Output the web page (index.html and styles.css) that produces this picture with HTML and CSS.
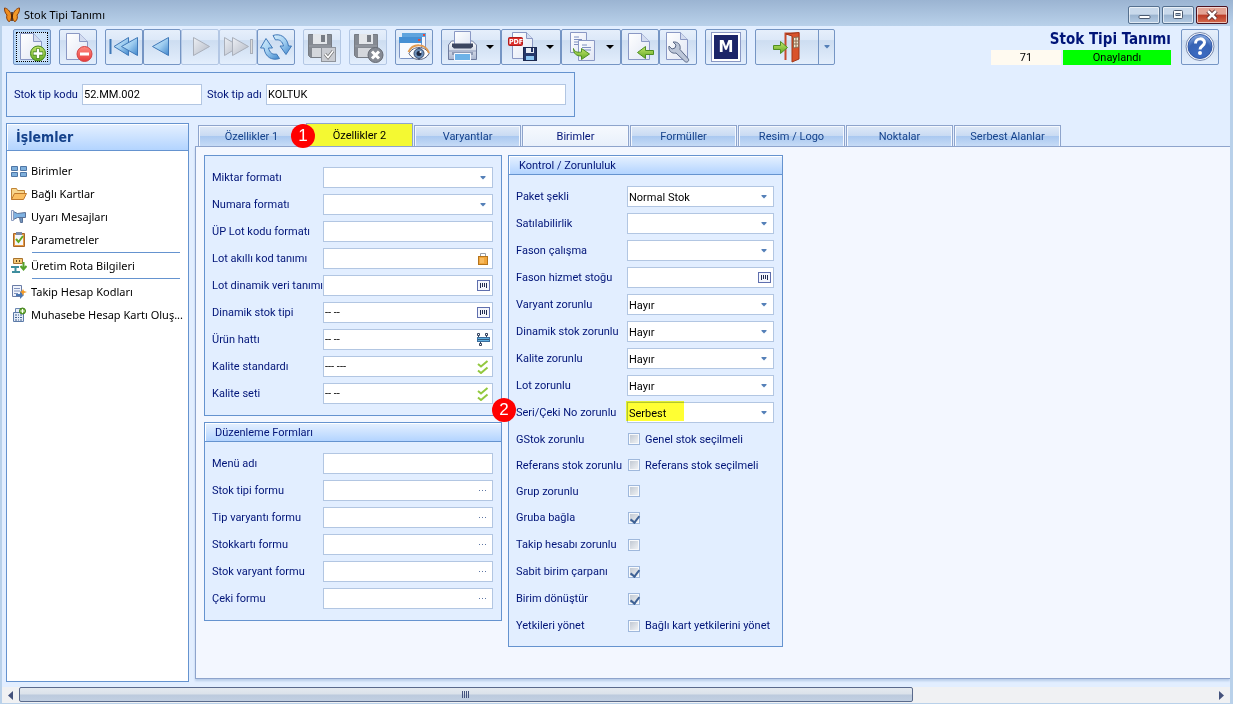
FILE: index.html
```html
<!DOCTYPE html>
<html lang="tr">
<head>
<meta charset="utf-8">
<meta name="viewport" content="width=device-width, initial-scale=1">
<title>Stok Tipi Tanımı</title>
<link rel="stylesheet" href="styles.css">
</head>
<body>
<svg class="sprite" aria-hidden="true">
  <defs>
    <linearGradient id="gBlue" x1="0" y1="0" x2="1" y2="1"><stop offset="0" stop-color="#d8effc"/><stop offset=".5" stop-color="#9fcdf0"/><stop offset="1" stop-color="#3f86cc"/></linearGradient>
    <linearGradient id="gGray" x1="0" y1="0" x2="1" y2="1"><stop offset="0" stop-color="#eceff4"/><stop offset="1" stop-color="#b4bac6"/></linearGradient>
    <linearGradient id="gPage" x1="0" y1="0" x2="1" y2="1"><stop offset="0" stop-color="#ffffff"/><stop offset="1" stop-color="#e0e6f4"/></linearGradient>
    <linearGradient id="gGreen" x1="0" y1="0" x2="0" y2="1"><stop offset="0" stop-color="#c3e66a"/><stop offset="1" stop-color="#62a824"/></linearGradient>
    <linearGradient id="gRed" x1="0" y1="0" x2="0" y2="1"><stop offset="0" stop-color="#ff8a80"/><stop offset="1" stop-color="#e83a3a"/></linearGradient>
    <linearGradient id="gSteel" x1="0" y1="0" x2="0" y2="1"><stop offset="0" stop-color="#ffffff"/><stop offset="1" stop-color="#aab6d0"/></linearGradient>
    <radialGradient id="gHelp" cx=".5" cy=".85" r=".9"><stop offset="0" stop-color="#3d6cc4"/><stop offset=".6" stop-color="#3763b4"/><stop offset="1" stop-color="#9dbcec"/></radialGradient>
  </defs>
  <symbol id="page" viewBox="0 0 32 32"><path d="M4.500 2.500h13l8 8v18h-21z" fill="url(#gPage)" stroke="#8a98c4"/><path d="M17.500 2.500v8h8" fill="#d3dcf0" stroke="#8a98c4"/></symbol>
  <symbol id="floppy" viewBox="0 0 32 32"><path d="M2.500 3.500h23v23h-21l-2-2z" fill="#858a92" stroke="#777c84"/><rect x="7" y="3" width="14" height="10" fill="#e3e6ea"/><rect x="15" y="4" width="4" height="7" fill="#777c84"/><rect x="6" y="17" width="17" height="9" fill="#d4d7dc"/><path d="M3 15h22" stroke="#9ca0a8"/></symbol>
  <symbol id="list" viewBox="0 0 13 11"><rect x=".5" y=".5" width="12" height="10" fill="#f4f6fc" stroke="#5f6fae"/><path d="M3.500 3v5M5.500 3v4M7.500 3v4M9.500 3v5" stroke="#1f2a50"/></symbol>
  <symbol id="checks" viewBox="0 0 12 14"><path d="M1 4l3 2.500L10.500 1M1 10.500L4 13l6.500-5.500" fill="none" stroke="#92c83e" stroke-width="2"/></symbol>
  <symbol id="dots" viewBox="0 0 10 3"><path d="M1 1.500h1M4 1.500h1M7 1.500h1" stroke="#5d76a4"/></symbol>
  <symbol id="drop" viewBox="0 0 8 4"><path d="M0 0h8L4 4z" fill="#000"/></symbol>
  <symbol id="caret" viewBox="0 0 6 4"><path d="M.500 0h5v1L3 3.500 .500 1z" fill="#5580b8"/></symbol>
</svg>

<div class="window">
  <header class="titlebar">
    <svg class="logo" viewBox="0 0 16 16"><path d="M7.500 8C6 4 3 1 .500 1c0 3 .500 5 2.500 7-1 2 0 6 2 6.500 1.500 0 2-2 2.500-4z" fill="#ef8d1e" stroke="#8a3d08"/><path d="M8.500 8C10 4 13 1 15.500 1c0 3-.500 5-2.500 7 1 2 0 6-2 6.500-1.500 0-2-2-2.500-4z" fill="#f29a28" stroke="#8a3d08"/><path d="M8 5v9" stroke="#3e1d05" stroke-width="1.500"/></svg>
    <span class="caption">Stok Tipi Tanımı</span>
    <div class="winbtns">
      <button aria-label="Küçült"><svg viewBox="0 0 30 16"><rect x="10" y="8.500" width="11" height="3" rx="1" fill="#fff" stroke="#4b5a70"/></svg></button>
      <button aria-label="Ekranı kapla"><svg viewBox="0 0 30 16"><rect x="10.500" y="3.500" width="9" height="8" rx="1" fill="#fff" stroke="#4b5a70"/><rect x="13" y="6.500" width="4" height="2" fill="#b4c6dc" stroke="#4b5a70"/></svg></button>
      <button class="close" aria-label="Kapat"><svg viewBox="0 0 30 16"><path d="M11 4l8 8M19 4l-8 8" stroke="#5a2a2a" stroke-width="4.500"/><path d="M11 4l8 8M19 4l-8 8" stroke="#fff" stroke-width="2.500"/></svg></button>
    </div>
  </header>

  <main class="client">
    <div class="top">
      <nav class="toolbar" aria-label="Araç çubuğu">
        <div class="group"><button class="focus" aria-label="Yeni"><svg viewBox="0 0 32 32"><use href="#page" width="32" height="32"/><circle cx="22" cy="22.500" r="7.500" fill="url(#gGreen)" stroke="#43851b"/><path d="M22 17.500v10M17 22.500h10" stroke="#3c7a18" stroke-width="4"/><path d="M22 18v9M17.500 22.500h9" stroke="#fff" stroke-width="2.500"/></svg></button></div>
        <div class="group"><button aria-label="Sil"><svg viewBox="0 0 32 32"><use href="#page" width="32" height="32"/><circle cx="22.500" cy="23" r="7.500" fill="url(#gRed)" stroke="#d24444"/><rect x="18" y="21.500" width="9" height="3" fill="#fff"/></svg></button></div>
        <div class="group">
          <button aria-label="İlk"><svg viewBox="0 0 32 32"><path d="M2.500 8v15" stroke="#3f78b8" stroke-width="2"/><path d="M20.500 6.500v18L6 15.500z" fill="url(#gBlue)" stroke="#3f78b8"/><path d="M29.500 6.500v18L13.500 15.500z" fill="url(#gBlue)" stroke="#3f78b8"/></svg></button>
          <button aria-label="Önceki"><svg viewBox="0 0 32 32"><path d="M22.500 6.500v18L6.500 15.500z" fill="url(#gBlue)" stroke="#3f78b8"/></svg></button>
          <button class="off" disabled aria-label="Sonraki"><svg viewBox="0 0 32 32"><path d="M9.500 6.500v18L25.500 15.500z" fill="url(#gGray)" stroke="#a9afba"/></svg></button>
          <button class="off" disabled aria-label="Son"><svg viewBox="0 0 32 32"><path d="M2.500 6.500v18L17.500 15.500z" fill="url(#gGray)" stroke="#a9afba"/><path d="M10.500 6.500v18L26.500 15.500z" fill="url(#gGray)" stroke="#a9afba"/><rect x="28.500" y="8.500" width="2" height="14" fill="#ddd" stroke="#a9afba"/></svg></button>
          <button aria-label="Yenile"><svg viewBox="0 0 32 32"><path d="M13 4.500C20 2 27 6 28.500 15h3L26 23.500 20 15h3.500c-1-4.500-4-7-8-6z" fill="url(#gBlue)" stroke="#3f78b8"/><path d="M19.500 27.500C12 30 5 26 4 17H.500L6 7.500l6.500 9.500H8.500c1 4.500 4 7 8 6z" fill="url(#gBlue)" stroke="#3f78b8"/></svg></button>
        </div>
        <div class="group"><button class="off" disabled aria-label="Kaydet"><svg viewBox="0 0 32 32"><use href="#floppy" width="32" height="32"/><rect x="15.500" y="16.500" width="14" height="14" fill="#c9ccd2" stroke="#8f949c"/><path d="M19 23l3 3.500L27 20" fill="none" stroke="#777" stroke-width="3"/><path d="M19 23l3 3.500L27 20" fill="none" stroke="#fff" stroke-width="1.500"/></svg></button></div>
        <div class="group"><button class="off" disabled aria-label="Kaydet ve kapat"><svg viewBox="0 0 32 32"><use href="#floppy" width="32" height="32"/><circle cx="23.500" cy="24" r="7.500" fill="#868b94" stroke="#666b74"/><path d="M20 20.500l7 7M27 20.500l-7 7" stroke="#fff" stroke-width="3"/></svg></button></div>
        <div class="group"><button aria-label="Önizle"><svg viewBox="0 0 32 32"><rect x="4.500" y="2.500" width="23" height="18" rx="1" fill="#f2f6fd" stroke="#7a93c4"/><path d="M4 2h24v4H4z" fill="#5fa4de"/><rect x="1.500" y="6.500" width="22" height="21" rx="1" fill="#f7faff" stroke="#7a93c4"/><path d="M1 6h23v6H1z" fill="#4690d4"/><path d="M20 9h2.500M25 4h2" stroke="#e2483c" stroke-width="2"/><path d="M11 22.500c4-8 16-8 20 0-4 8-16 8-20 0z" fill="#fff" stroke="#54607e"/><path d="M10.500 21c4-9 17-9 20.500 1" fill="none" stroke="#e09a50" stroke-width="2"/><circle cx="21" cy="22.500" r="5" fill="#6c8fb8" stroke="#3a4d70"/><circle cx="21" cy="22.500" r="2.500" fill="#1c2740"/><circle cx="22.500" cy="21" r="1" fill="#fff"/></svg></button></div>
        <div class="group">
          <button class="menu" aria-label="Yazdır"><svg viewBox="0 0 32 32"><path d="M2.500 28.500V14l3-4h21l4 4v14.500z" fill="url(#gSteel)" stroke="#6d7a9c"/><path d="M8.500 .500h16v14h-16z" fill="url(#gPage)" stroke="#8a98c4"/><path d="M6 12.500h21v3l-2 2H8l-2-2z" fill="#3c4660"/><path d="M3 20h27" stroke="#8f9cbc"/><path d="M6 21h21v3H6z" fill="#8e99b4"/><path d="M8.500 22.500h16v7h-16z" fill="#6db2e8" stroke="#f5f8ff"/></svg><svg class="arrow" viewBox="0 0 8 4"><use href="#drop"/></svg></button>
          <button class="menu" aria-label="PDF kaydet"><svg viewBox="0 0 32 32"><path d="M6.500 1.500h14l6 6v20h-20z" fill="url(#gPage)" stroke="#8a98c4"/><path d="M20.500 1.500v6h6" fill="#d3dcf0" stroke="#8a98c4"/><rect x="2.500" y="6.500" width="14" height="8" rx="1" fill="#dc2e2a" stroke="#b01c1c"/><text x="3" y="13" class="pdf">PDF</text><rect x="17.500" y="16.500" width="13" height="13" fill="#26386a" stroke="#1a2850"/><rect x="20" y="17" width="8" height="5" fill="#e8ecf4"/><rect x="25" y="17" width="2" height="4" fill="#26386a"/><rect x="20" y="25" width="8" height="4" fill="#8ec6f2"/></svg><svg class="arrow" viewBox="0 0 8 4"><use href="#drop"/></svg></button>
          <button class="menu" aria-label="Kopyala"><svg viewBox="0 0 32 32"><path d="M4.500 1.500h16v20h-16z" fill="url(#gPage)" stroke="#8a98c4"/><path d="M8 6h5M8 8.500h8M8 11h8M8 13.500h8" stroke="#7f90c0"/><path d="M12.500 9.500h16v20h-16z" fill="url(#gPage)" stroke="#8a98c4"/><path d="M16 14h5M16 16.500h9M16 19h9" stroke="#7f90c0"/><path d="M7.500 17.500c1 4 5 4 8 3.500v-3.500l8 5.500-8 5.500v-3.500c-5 0-8-2-8-7.500z" fill="url(#gGreen)" stroke="#4f8f22"/></svg><svg class="arrow" viewBox="0 0 8 4"><use href="#drop"/></svg></button>
          <button aria-label="İçeri al"><svg viewBox="0 0 32 32"><use href="#page" width="32" height="32"/><path d="M29.500 19.500h-8v-4l-8 6 8 6v-4h8z" fill="url(#gGreen)" stroke="#4f8f22"/></svg></button>
          <button aria-label="Ayarlar"><svg viewBox="0 0 32 32"><path d="M4.500 1.500h14l7 7v20h-21z" fill="url(#gPage)" stroke="#8a98c4"/><path d="M18.500 1.500v7h7" fill="#d3dcf0" stroke="#8a98c4"/><path d="M11 11l3 3-1 3-3 1-3-3c-1 5 3 8 7 7l9 8.500c2 2 5-1 3-3L18 18.500c1-5-2-8-7-7.500z" fill="#bcc6d8" stroke="#5c6a88"/></svg></button>
        </div>
        <div class="group"><button class="m" aria-label="M"><span>M</span></button></div>
        <div class="group"><button class="exit" aria-label="Çıkış"><svg viewBox="0 0 32 32"><path d="M14.500 29V2.500h13V9" fill="none" stroke="#c64a2c" stroke-width="2"/><path d="M15 3l13-1.500V28l-7 3V5z" fill="#d9532b" stroke="#a33719"/><path d="M22.500 6.500l5-.5v10l-5 1z" fill="#f3ead2" stroke="#8d6a50"/><path d="M25 6v10M22 10h6M22 13h6" stroke="#8d6a50"/><path d="M2.500 14.500h7v-4l7 6-7 6v-4h-7z" fill="url(#gGreen)" stroke="#4f8f22"/></svg></button><button class="split" aria-label="Çıkış seçenekleri"><svg class="small" viewBox="0 0 6 4"><use href="#caret"/></svg></button></div>
      </nav>
      <div class="status">
        <h1>Stok Tipi Tanımı</h1>
        <div class="tags"><span class="num">71</span><span class="ok">Onaylandı</span></div>
      </div>
      <button class="help" aria-label="Yardım"><svg viewBox="0 0 32 32"><circle cx="16" cy="15.500" r="14" fill="#f1f4fa" stroke="#7c8db0"/><circle cx="16" cy="15.500" r="12" fill="url(#gHelp)" stroke="#3159a8"/><path d="M11.500 12.500c0-6 9-6 9-1 0 3.500-4.500 3.500-4.500 7" fill="none" stroke="#fff" stroke-width="3"/><circle cx="16" cy="22" r="2" fill="#fff"/></svg></button>
    </div>

    <form class="keys">
      <label for="kod">Stok tip kodu</label><input id="kod" class="code" value="52.MM.002">
      <label for="adi" class="second">Stok tip adı</label><input id="adi" class="name" value="KOLTUK">
    </form>

    <div class="work">
      <aside class="side">
        <h2>İşlemler</h2>
        <ul>
          <li><a href="#"><svg viewBox="0 0 16 16"><path d="M.500 3.500h6v4h-6zM9.500 3.500h6v4h-6zM.500 9.500h6v4h-6zM9.500 9.500h6v4h-6z" fill="#7fb0dc" stroke="#4f76a6"/></svg>Birimler</a></li>
          <li><a href="#"><svg viewBox="0 0 16 16"><path d="M.500 13.500v-11h5l1 2h7v3" fill="#f7d58c" stroke="#c08436"/><path d="M.500 13.500l3-6h12l-3 6z" fill="#fbbf62" stroke="#c07a2c"/></svg>Bağlı Kartlar</a></li>
          <li><a href="#"><svg viewBox="0 0 16 16"><path d="M2.500 2.500l4 2 8-1v5l-8 0-4 2z" fill="#7fb2e2" stroke="#5a7197"/><path d="M.500 1.500h2v10h-2z" fill="#eef2fa" stroke="#8b9cc0"/><path d="M8.500 8.500h3v5h-2z" fill="#7296be" stroke="#5a7197"/></svg>Uyarı Mesajları</a></li>
          <li><a href="#"><svg viewBox="0 0 16 16"><path d="M2.500 1.500h11v13h-11z" fill="#e79b43" stroke="#a8662a"/><path d="M4 3h8v10H4z" fill="#f4f6fb"/><path d="M5 0h6v3H5z" fill="#7c8ba8"/><path d="M5 7l2.500 3L12 4" fill="none" stroke="#61a824" stroke-width="2"/></svg>Parametreler</a></li>
          <li class="ruled"><a href="#"><svg viewBox="0 0 16 16"><path d="M2.500 .500h9v5h-9z" fill="#f4c877" stroke="#a8722e"/><path d="M5 3h1M8 3h1" stroke="#5b431f" stroke-width="2"/><path d="M12.500 4v6m-3-2l3 3.500L15.500 8" fill="none" stroke="#55a12b" stroke-width="2"/><path d="M0 9h8M1 14h8M4.500 9v5" stroke="#3e8e9e" stroke-width="2"/></svg>Üretim Rota Bilgileri</a></li>
          <li class="ruled"><a href="#"><svg viewBox="0 0 16 16"><path d="M1.500 1.500h9v11h-9z" fill="#eff3fb" stroke="#6a7ca6"/><path d="M3 4.500h6M3 7h6M3 9.500h4" stroke="#8193bd"/><path d="M5 10h4V7l4 4-4 4v-3H5z" fill="#4b78b4"/><path d="M12 5l1 2 3 1-3 1-1 3-1-3-2-1 2-1z" fill="#f39a24"/></svg>Takip Hesap Kodları</a></li>
          <li><a href="#"><svg viewBox="0 0 16 16"><path d="M4.500 1.500h8v5h-8z" fill="#e8eefa" stroke="#6a86b0"/><path d="M2.500 5.500h10v9h-10z" fill="#e4ecf8" stroke="#5c7ba8"/><path d="M4 8h2M7 8h1M9 8h2M4 10.500h2M7 10.500h1M9 10.500h2M4 13h2M7 13h1M9 13h2" stroke="#41618f"/><circle cx="11.500" cy="4" r="3" fill="#73b53a" stroke="#3f7d1c"/><path d="M11.500 2v4M9.500 4h4" stroke="#fff"/></svg>Muhasebe Hesap Kartı Oluş...</a></li>
        </ul>
      </aside>

      <section class="content">
        <div class="tabs" role="tablist">
          <button role="tab">Özellikler 1</button>
          <button role="tab" class="active" aria-selected="true">Özellikler 2<span class="badge">1</span></button>
          <button role="tab">Varyantlar</button>
          <button role="tab" class="hot">Birimler</button>
          <button role="tab">Formüller</button>
          <button role="tab">Resim / Logo</button>
          <button role="tab">Noktalar</button>
          <button role="tab">Serbest Alanlar</button>
        </div>
        <form class="panel">
          <div class="column left">
            <div class="box plain">
              <div class="row"><label for="a1">Miktar formatı</label><span class="field"><select id="a1"><option></option></select><svg class="small" viewBox="0 0 6 4"><use href="#caret"/></svg></span></div>
              <div class="row"><label for="a2">Numara formatı</label><span class="field"><select id="a2"><option></option></select><svg class="small" viewBox="0 0 6 4"><use href="#caret"/></svg></span></div>
              <div class="row"><label for="a3">ÜP Lot kodu formatı</label><span class="field"><input id="a3"></span></div>
              <div class="row"><label for="a4">Lot akıllı kod tanımı</label><span class="field"><input id="a4"><button type="button" aria-label="Kilit"><svg width="10" height="13" viewBox="0 0 10 13"><path d="M2.500 5V1.500h5V5" fill="none" stroke="#97a0ac"/><rect x=".5" y="4.500" width="9" height="8" fill="#f0a63c" stroke="#b5741c"/><path d="M3 6v5M5 6v5" stroke="#ffd083"/></svg></button></span></div>
              <div class="row"><label for="a5">Lot dinamik veri tanımı</label><span class="field"><input id="a5"><button type="button" aria-label="Liste"><svg width="13" height="11"><use href="#list"/></svg></button></span></div>
              <div class="row"><label for="a6">Dinamik stok tipi</label><span class="field"><input id="a6" value="-- --"><button type="button" aria-label="Liste"><svg width="13" height="11"><use href="#list"/></svg></button></span></div>
              <div class="row"><label for="a7">Ürün hattı</label><span class="field"><input id="a7" value="-- --"><button type="button" aria-label="Hat"><svg width="13" height="13" viewBox="0 0 13 13"><path d="M.500 .500h2v2h-2zM8.500 .500h2v2h-2zM2.500 10.500h2v2h-2z" fill="#fff" stroke="#34425e"/><path d="M1.500 3v2M9.500 3v2M3.500 8v2" stroke="#34425e"/><rect x=".5" y="4.500" width="12" height="4" fill="#62b0e0" stroke="#3a6d9c"/><path d="M1 6.500h11" stroke="#32597c"/></svg></button></span></div>
              <div class="row"><label for="a8">Kalite standardı</label><span class="field"><input id="a8" value="--- ---"><button type="button" aria-label="Seç"><svg width="12" height="14"><use href="#checks"/></svg></button></span></div>
              <div class="row"><label for="a9">Kalite seti</label><span class="field"><input id="a9" value="-- --"><button type="button" aria-label="Seç"><svg width="12" height="14"><use href="#checks"/></svg></button></span></div>
            </div>
            <div class="box">
              <h3>Düzenleme Formları</h3>
              <div class="rows">
                <div class="row"><label for="b1">Menü adı</label><span class="field"><input id="b1"></span></div>
                <div class="row"><label for="b2">Stok tipi formu</label><span class="field"><input id="b2"><button type="button" aria-label="Gözat"><svg width="10" height="3"><use href="#dots"/></svg></button></span></div>
                <div class="row"><label for="b3">Tip varyantı formu</label><span class="field"><input id="b3"><button type="button" aria-label="Gözat"><svg width="10" height="3"><use href="#dots"/></svg></button></span></div>
                <div class="row"><label for="b4">Stokkartı formu</label><span class="field"><input id="b4"><button type="button" aria-label="Gözat"><svg width="10" height="3"><use href="#dots"/></svg></button></span></div>
                <div class="row"><label for="b5">Stok varyant formu</label><span class="field"><input id="b5"><button type="button" aria-label="Gözat"><svg width="10" height="3"><use href="#dots"/></svg></button></span></div>
                <div class="row"><label for="b6">Çeki formu</label><span class="field"><input id="b6"><button type="button" aria-label="Gözat"><svg width="10" height="3"><use href="#dots"/></svg></button></span></div>
              </div>
            </div>
          </div>
          <div class="column right">
            <div class="box">
              <h3>Kontrol / Zorunluluk</h3>
              <div class="rows">
                <div class="row"><label for="c1">Paket şekli</label><span class="field"><select id="c1"><option>Normal Stok</option></select><svg class="small" viewBox="0 0 6 4"><use href="#caret"/></svg></span></div>
                <div class="row"><label for="c2">Satılabilirlik</label><span class="field"><select id="c2"><option></option></select><svg class="small" viewBox="0 0 6 4"><use href="#caret"/></svg></span></div>
                <div class="row"><label for="c3">Fason çalışma</label><span class="field"><select id="c3"><option></option></select><svg class="small" viewBox="0 0 6 4"><use href="#caret"/></svg></span></div>
                <div class="row"><label for="c4">Fason hizmet stoğu</label><span class="field"><input id="c4"><button type="button" aria-label="Liste"><svg width="13" height="11"><use href="#list"/></svg></button></span></div>
                <div class="row"><label for="c5">Varyant zorunlu</label><span class="field"><select id="c5"><option>Hayır</option></select><svg class="small" viewBox="0 0 6 4"><use href="#caret"/></svg></span></div>
                <div class="row"><label for="c6">Dinamik stok zorunlu</label><span class="field"><select id="c6"><option>Hayır</option></select><svg class="small" viewBox="0 0 6 4"><use href="#caret"/></svg></span></div>
                <div class="row"><label for="c7">Kalite zorunlu</label><span class="field"><select id="c7"><option>Hayır</option></select><svg class="small" viewBox="0 0 6 4"><use href="#caret"/></svg></span></div>
                <div class="row"><label for="c8">Lot zorunlu</label><span class="field"><select id="c8"><option>Hayır</option></select><svg class="small" viewBox="0 0 6 4"><use href="#caret"/></svg></span></div>
                <div class="row"><span class="badge">2</span><label for="c9">Seri/Çeki No zorunlu</label><span class="field"><select id="c9"><option>Serbest</option></select><svg class="small" viewBox="0 0 6 4"><use href="#caret"/></svg><span class="marker"></span></span></div>
                <div class="row short"><label for="d1">GStok zorunlu</label><input type="checkbox" id="d1"><label class="note" for="d1">Genel stok seçilmeli</label></div>
                <div class="row short"><label for="d2">Referans stok zorunlu</label><input type="checkbox" id="d2"><label class="note" for="d2">Referans stok seçilmeli</label></div>
                <div class="row short"><label for="d3">Grup zorunlu</label><input type="checkbox" id="d3"></div>
                <div class="row"><label for="d4">Gruba bağla</label><input type="checkbox" id="d4" checked></div>
                <div class="row"><label for="d5">Takip hesabı zorunlu</label><input type="checkbox" id="d5"></div>
                <div class="row"><label for="d6">Sabit birim çarpanı</label><input type="checkbox" id="d6" checked></div>
                <div class="row"><label for="d7">Birim dönüştür</label><input type="checkbox" id="d7" checked></div>
                <div class="row"><label for="d8">Yetkileri yönet</label><input type="checkbox" id="d8"><label class="note" for="d8">Bağlı kart yetkilerini yönet</label></div>
              </div>
            </div>
          </div>
        </form>
      </section>
    </div>

    <div class="scroll">
      <button aria-label="Sola kaydır"><svg width="5" height="9" viewBox="0 0 5 9"><path d="M5 0v9L0 4.500z" fill="#44527c"/></svg></button>
      <div class="track"><div class="thumb"><svg width="8" height="7" viewBox="0 0 8 7"><path d="M.500 0v7M2.500 0v7M4.500 0v7M6.500 0v7" stroke="#44527c"/></svg></div><div class="rest"></div></div>
      <button aria-label="Sağa kaydır"><svg width="5" height="9" viewBox="0 0 5 9"><path d="M0 0v9l5-4.500z" fill="#44527c"/></svg></button>
    </div>
  </main>
</div>
</body>
</html>
```
FILE: styles.css
```css
* { box-sizing: border-box; }
body {
  margin: 0;
  font-family: Roboto, "Noto Sans", sans-serif;
  font-size: 11px;
  color: #001478;
}
button, input, select { font: inherit; color: inherit; margin: 0; padding: 0; }
button { border: 0; background: none; }
svg { display: block; }
.sprite { position: absolute; width: 0; height: 0; }

.window {
  display: flex;
  flex-direction: column;
  min-height: 100vh;
  background: #b9d1ea;
}
.titlebar {
  display: flex;
  align-items: center;
  height: 26px;
  padding: 3px 5px 0 4px;
  background: linear-gradient(#9bb4d2, #b9d1ea);
}
.logo { width: 16px; height: 16px; margin-right: 4px; }
.caption { flex: 1; font-family: "Noto Sans", sans-serif; color: #000; }
.winbtns { display: flex; gap: 2px; }
.winbtns button {
  width: 32px;
  height: 18px;
  border: 1px solid #55708f;
  border-radius: 2px;
  background: linear-gradient(#c9d9eb 45%, #9bb4d0 50%, #b4cbe4);
  box-shadow: inset 0 0 0 1px rgba(255, 255, 255, .6);
}
.winbtns .close { border-color: #4c1220; background: linear-gradient(#e3a394 45%, #bb3b27 50%, #d4694c); }

.client {
  flex: 1;
  display: flex;
  flex-direction: column;
  margin: 0 3px 1px 2px;
  background: #e2eeff;
}
.top { display: flex; padding: 3px 11px 0; }
.toolbar { flex: 1; display: flex; gap: 8px; }
.group { display: flex; }
.group button, .help {
  display: flex;
  align-items: center;
  justify-content: center;
  width: 38px;
  height: 36px;
  border: 1px solid #7595c4;
  border-radius: 2px;
  background: linear-gradient(#e6effb, #dce8f8 30%, #cdddf1 31%, #e3eefc);
}
.group svg, .help svg { width: 32px; height: 32px; }
.group .off { border-color: #b3c7e4; }
.group .focus { background: #cfe4fa; box-shadow: inset 0 0 0 2px #b5d6f8; outline: 1px dotted #000; outline-offset: -4px; }
.group .menu { width: 60px; gap: 8px; padding-right: 2px; }
.group .arrow { width: 8px; height: 4px; }
.group .small { width: 6px; height: 4px; }
.group .m { width: 42px; }
.m span {
  width: 30px;
  height: 30px;
  border: 1px solid #8a98c4;
  background: #1b2468;
  box-shadow: inset 0 0 0 2px #fff;
  color: #fff;
  font: bold 15px/28px "DejaVu Sans", sans-serif;
}
.group .exit { width: 64px; border-radius: 2px 0 0 2px; }
.group .split { width: 17px; margin-left: -1px; border-radius: 0 2px 2px 0; }
.pdf { font: bold 7px "DejaVu Sans Condensed", sans-serif; fill: #fff; }

.status { width: 180px; margin-right: 10px; }
h1 { margin: 0; font: bold 15px/21px "DejaVu Sans Condensed", sans-serif; text-align: right; }
.tags { display: flex; gap: 2px; color: #000; text-align: center; line-height: 15px; }
.num { width: 70px; background: #fffaf0; }
.ok { flex: 1; background: #00ff00; }

.keys {
  display: flex;
  align-items: center;
  align-self: flex-start;
  height: 45px;
  margin: 7px 0 0 4px;
  padding: 0 8px 0 7px;
  border: 1px solid #6593cf;
}
.keys input, .field { height: 21px; border: 1px solid #b2c6e2; background: #fff; color: #000; }
.keys input { padding: 0 1px; border-radius: 0; }
.keys label { width: 68px; }
.keys .second { width: 59px; }
.keys .code { width: 120px; margin-right: 5px; }
.keys .name { width: 300px; }

.work { flex: 1; display: flex; margin: 6px 0 0 4px; }
.side { flex: none; width: 183px; margin-bottom: 5px; border: 1px solid #6593cf; background: #fff; }
h2 {
  margin: 0;
  height: 26px;
  padding-left: 8px;
  border: 1px solid #fff;
  border-width: 1px 0 0 1px;
  box-shadow: 0 1px #6593cf;
  background: linear-gradient(#e3efff, #b3d4ff);
  color: #15428b;
  font: bold 14px/25px "DejaVu Sans Condensed", sans-serif;
}
.side ul { list-style: none; margin: 0; padding: 9px 0 0 4px; }
.side a {
  display: flex;
  align-items: center;
  gap: 4px;
  height: 23px;
  color: #000;
  text-decoration: none;
  font-family: "Noto Sans", sans-serif;
  white-space: nowrap;
}
.side a svg { width: 16px; height: 16px; }
.ruled::before { content: ""; display: block; height: 1px; margin: 1px 8px 1px 21px; background: #6593cf; }

.content { flex: 1; display: flex; flex-direction: column; margin: 0 0 8px 6px; }
.tabs { display: flex; align-items: flex-end; gap: 1px; height: 23px; padding-left: 3px; }
.tabs button {
  width: 107px;
  height: 21px;
  padding-top: 1px;
  border: 1px solid #8ea4cc;
  border-bottom: 0;
  box-shadow: inset 1px 1px #f4f8fe, inset -1px 0 #f4f8fe;
  background: linear-gradient(#dfe9f7, #c9dbf3 48%, #a9c8f0 50%, #c6dbf6);
  color: #15428b;
}
.tabs .hot { background: linear-gradient(#f6f9fe, #e8f0fb); color: #001478; }
.tabs .active { position: relative; height: 23px; background: #f4f932; box-shadow: none; color: #000; }
.badge {
  position: absolute;
  left: -16px;
  top: 0;
  width: 24px;
  height: 24px;
  border-radius: 50%;
  background: #ff0000;
  color: #fff;
  font: 17px/24px "Liberation Sans", sans-serif;
  text-align: center;
}
.panel {
  flex: 1;
  display: flex;
  align-items: flex-start;
  gap: 6px;
  padding: 8px;
  border: 1px solid #8ea4cc;
  border-right: 0;
  background: #f3f7ff;
  box-shadow: 0 2px 2px #b9cdea;
}
.column { display: flex; flex-direction: column; gap: 6px; }
.left { width: 298px; }
.right { width: 275px; }
.box { border: 1px solid #6593cf; background: #e2eeff; }
.plain, .rows { display: flex; flex-direction: column; gap: 6px; }
.plain { padding: 11px 8px 11px 7px; }
.rows { padding: 12px 8px 11px 7px; }
.right .rows { padding-bottom: 10px; }
h3 {
  margin: 0;
  height: 18px;
  padding-left: 9px;
  border: 1px solid #fff;
  border-width: 1px 0 0 1px;
  box-shadow: 0 1px #6593cf;
  background: linear-gradient(#e3efff, #b3d4ff);
  font-size: 11px;
  font-weight: normal;
  line-height: 17px;
}
.row { display: flex; align-items: center; position: relative; height: 21px; }
.row.short { height: 20px; }
.row label { flex: none; width: 111px; white-space: nowrap; }
.row .note { width: auto; margin-left: 5px; }
.field { position: relative; flex: 1; display: flex; align-items: center; }
.field input, .field select {
  flex: 1;
  min-width: 0;
  width: 100%;
  height: 19px;
  padding: 0 1px;
  border: 0;
  background: transparent;
  appearance: none;
}
.field select { padding-top: 1px; }
.field > .small { position: absolute; right: 6px; top: 8px; width: 6px; height: 4px; pointer-events: none; }
.field button { display: flex; align-items: center; justify-content: center; width: 18px; height: 19px; }
.marker {
  position: absolute;
  left: -2px;
  top: -2px;
  width: 58px;
  height: 20px;
  background: #ffff33;
  mix-blend-mode: multiply;
  pointer-events: none;
}
.row .badge { left: -24px; top: -4px; }
.row input[type="checkbox"] {
  appearance: none;
  flex: none;
  display: flex;
  width: 12px;
  height: 12px;
  margin-left: 1px;
  border: 1px solid #9fb8dc;
  background: linear-gradient(135deg, #bcc4cf, #f4f6f8);
  box-shadow: inset 0 0 0 1px #f8fafc;
}
.row input[type="checkbox"]:checked::before {
  content: "";
  width: 4px;
  height: 7px;
  margin: 1px 0 0 3px;
  border: solid #3f6296;
  border-width: 0 2px 2px 0;
  transform: rotate(38deg);
}

.scroll { display: flex; height: 16px; background: #f0f1f3; }
.scroll button { display: flex; align-items: center; justify-content: center; width: 17px; }
.track { flex: 1; display: flex; }
.rest { flex: 301; }
.thumb {
  display: flex;
  flex: 893;
  align-items: center;
  justify-content: center;
  height: 15px;
  border: 1px solid #5a6a8c;
  border-radius: 2px;
  background: linear-gradient(#e4e9ef, #dbe2ea 48%, #bccadd 52%, #c2d0e2);
}
```
